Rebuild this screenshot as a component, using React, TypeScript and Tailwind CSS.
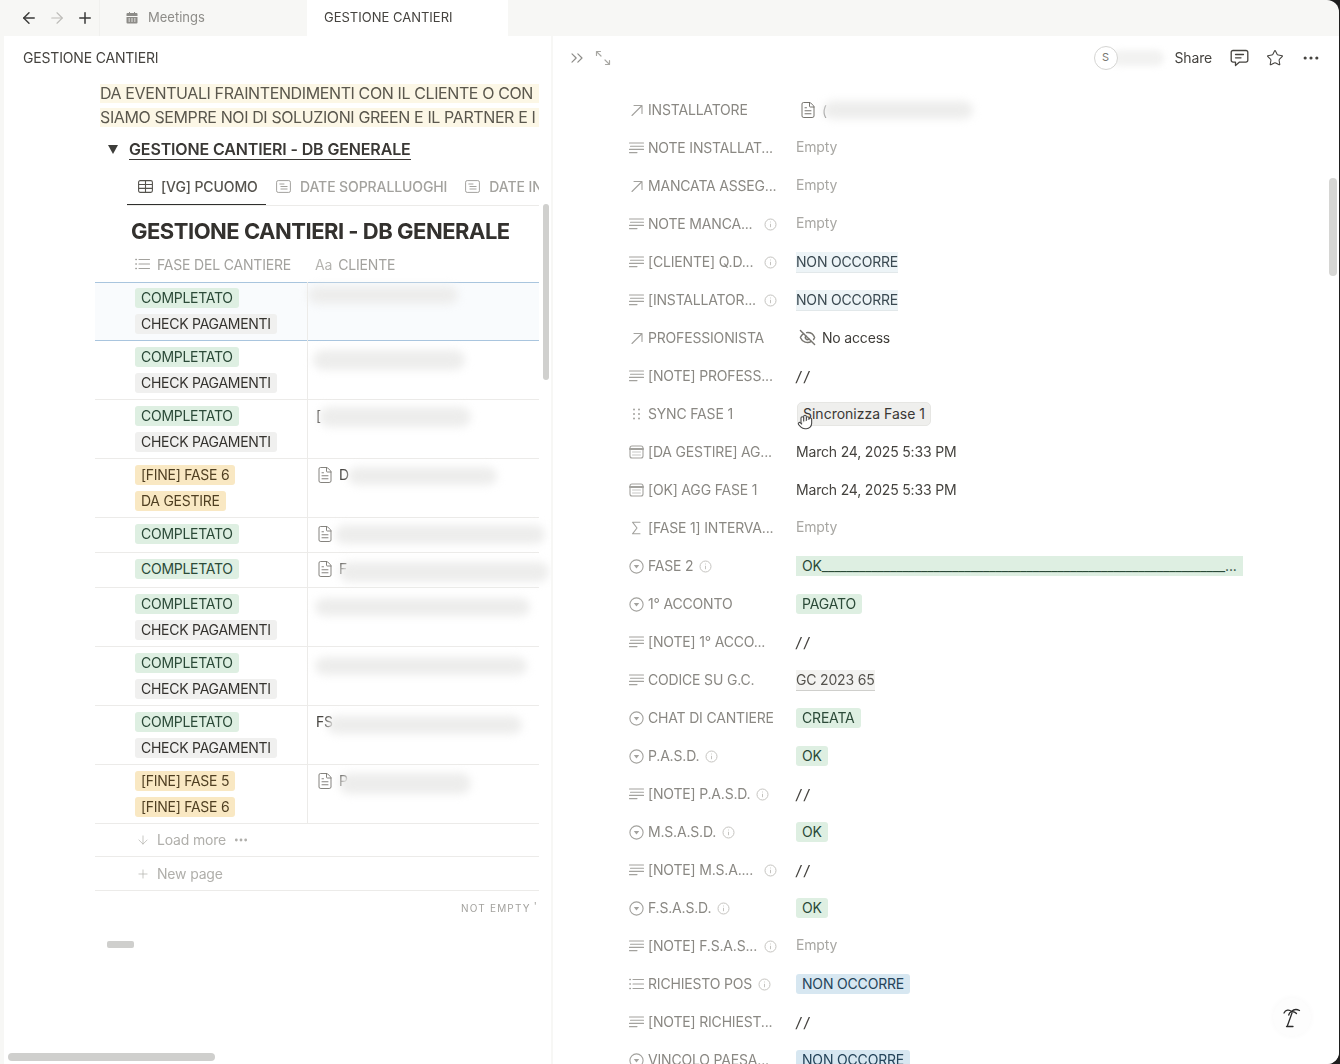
import { ArrowLeft, ArrowRight, Plus, ChevronsRight, Star, Ellipsis, FileText, EyeOff, Hand, ArrowDown } from "lucide-react";

const stroke = { fill: "none", stroke: "currentColor", strokeWidth: 1.1, strokeLinecap: "round" as const, strokeLinejoin: "round" as const };

function TextIcon() {
  return (
    <svg width="15" height="14" viewBox="0 0 15 14" {...stroke}>
      <path d="M.5 2h14M1.5 5.2h13M.5 8.400h14M.5 11.600h7.500" />
    </svg>
  );
}
function RelIcon() {
  return (
    <svg width="15" height="14" viewBox="0 0 15 14" {...stroke}>
      <path d="M3 12.500 12.500 3M5 2.500h8v8" />
    </svg>
  );
}
function ListIcon() {
  return (
    <svg width="15" height="14" viewBox="0 0 15 14" {...stroke}>
      <path d="M4 2.500h10.500M4 7h10.500M4 11.500h10.500" />
      <path d="M.8 2.500h.6M.8 7h.6M.8 11.500h.6" strokeWidth="1.400" />
    </svg>
  );
}
function SelectIcon() {
  return (
    <svg width="15" height="15" viewBox="0 0 15 15" {...stroke}>
      <circle cx="7.500" cy="7.500" r="6.600" />
      <path d="M4.800 6h5.400L7.500 9.400z" fill="currentColor" stroke="none" />
    </svg>
  );
}
function SigmaIcon() {
  return (
    <svg width="15" height="14" viewBox="0 0 15 14" {...stroke}>
      <path d="M11 1.200H3.500L8 7l-4.500 5.800H11" />
    </svg>
  );
}
function CalIcon() {
  return (
    <svg width="15" height="14" viewBox="0 0 15 14" {...stroke}>
      <rect x="1" y="1" width="13" height="12" rx="2" />
      <path d="M1 4h13" strokeWidth="2" />
      <path d="M3.500 7h8M3.500 10h8" strokeWidth=".6" />
    </svg>
  );
}
function GripIcon() {
  return (
    <svg width="15" height="14" viewBox="0 0 15 14" fill="currentColor">
      <circle cx="5" cy="2.500" r="1" />
      <circle cx="10" cy="2.500" r="1" />
      <circle cx="5" cy="7" r="1" />
      <circle cx="10" cy="7" r="1" />
      <circle cx="5" cy="11.500" r="1" />
      <circle cx="10" cy="11.500" r="1" />
    </svg>
  );
}
function InfoIcon() {
  return (
    <svg width="13" height="13" viewBox="0 0 13 13" fill="none" stroke="#c4c3bf" strokeWidth="1" className="shrink-0">
      <circle cx="6.500" cy="6.500" r="5.500" />
      <path d="M6.500 5.800v3.400M6.500 3.600v.8" />
    </svg>
  );
}
function TableIcon() {
  return (
    <svg width="15" height="13" viewBox="0 0 15 13" fill="none" stroke="currentColor" strokeWidth="1.100">
      <rect x=".6" y=".6" width="13.800" height="11.800" rx="1.600" />
      <path d="M.6 4.500h13.800M.6 8.400h13.800M7.500 .6v11.800" />
    </svg>
  );
}
function FeedIcon() {
  return (
    <svg width="15" height="13" viewBox="0 0 15 13" fill="none" stroke="currentColor" strokeWidth="1">
      <rect x=".6" y=".6" width="13.800" height="11.800" rx="1.600" />
      <path d="M3.400 4h5M4.500 6.500h7M4.500 9h7" />
    </svg>
  );
}
function MeetIcon() {
  return (
    <svg width="12" height="12" viewBox="0 0 12 12" fill="currentColor">
      <path d="M1.500 1H3V0h1v1h4V0h1v1h1.500A1 1 0 0 1 11.500 2v2H.5V2a1 1 0 0 1 1-1Z" />
      <path d="M.5 5h11v5.500a1 1 0 0 1-1 1h-9a1 1 0 0 1-1-1Zm2 1.500v1h1.500v-1Zm2.700 0v1h1.600v-1Zm2.800 0v1h1.500v-1Zm-5.500 2v1h1.500v-1Zm2.700 0v1h1.600v-1Zm2.800 0v1h1.500v-1Z" fillRule="evenodd" />
    </svg>
  );
}
function ExpandIcon() {
  return (
    <svg width="16" height="16" viewBox="0 0 16 16" fill="none" stroke="currentColor" strokeWidth="1.200" strokeLinecap="round" strokeLinejoin="round">
      <path d="M1.500 5.500v-4h4M1.800 1.800 6 6M14.500 10.500v4h-4M14.200 14.200 10 10" />
    </svg>
  );
}
function CommentIcon() {
  return (
    <svg width="19" height="18" viewBox="0 0 19 18" fill="none" stroke="currentColor" strokeWidth="1.300" strokeLinejoin="round" strokeLinecap="round">
      <path d="M3 1.500h13a1.800 1.800 0 0 1 1.800 1.800v8a1.800 1.800 0 0 1-1.800 1.800h-6.500L5.500 16.500v-3.400H3a1.800 1.800 0 0 1-1.800-1.800v-8A1.800 1.800 0 0 1 3 1.500Z" />
      <path d="M5.500 5.500h8M5.500 8.800h5.500" />
    </svg>
  );
}
function PalmIcon() {
  return (
    <svg width="18" height="21" viewBox="0 0 18 21" fill="none" stroke="#2b2b2b" strokeWidth="1.300" strokeLinecap="round" strokeLinejoin="round">
      <path d="M1 6C2.500 3 6 2 8.500 4.500c2-2 5.500-2.300 8-1" />
      <path d="M8.500 4.500c-1 .5-2.300 1.300-2.800 3.500M8.500 4.500c2 .2 4 .8 5 2" />
      <path d="M9 6 4.500 18.500M3.500 19.500h6.500" />
    </svg>
  );
}

type PillColor = "g" | "n" | "y" | "b";
const pillClass: Record<PillColor, string> = {
  g: "bg-[#deefe2] text-[#2b4a38]",
  n: "bg-[#f0f0ef] text-[#35332f]",
  y: "bg-[#f9e8c3] text-[#4f3f22]",
  b: "bg-[#d7e7f1] text-[#25445a]",
};
function Pill({ c, children }: { c: PillColor; children: string }) {
  return <span className={`h-[20px] px-[6px] rounded-[3px] text-[14px] leading-[20px] whitespace-nowrap ${pillClass[c]}`}>{children}</span>;
}

type Row = {
  pills: [PillColor, string][];
  file?: boolean;
  prefix?: string;
  blur: string;
  h: string;
};
const C: [PillColor, string] = ["g", "COMPLETATO"];
const P: [PillColor, string] = ["n", "CHECK PAGAMENTI"];
const rows: Row[] = [
  { pills: [C, P], blur: "ml-[-8px] mt-[-2px] w-[150px] h-[18px]", h: "h-[58px] pt-[5px] bg-[#f9fbfd] border-[#a9c5de]" },
  { pills: [C, P], blur: "ml-[-3px] mt-[3px] w-[152px] h-[20px]", h: "h-[59px] pt-[6px] border-[#ecebe9]" },
  { pills: [C, P], prefix: "[", blur: "ml-[-2px] mt-[1px] w-[152px] h-[20px]", h: "h-[59px] pt-[6px] border-[#ecebe9]" },
  { pills: [["y", "[FINE] FASE 6"], ["y", "DA GESTIRE"]], file: true, prefix: "D", blur: "ml-[-1px] mt-[2px] w-[149px] h-[18px]", h: "h-[59px] pt-[6px] border-[#ecebe9]" },
  { pills: [C], file: true, blur: "ml-[-4px] mt-[1px] w-[210px] h-[19px]", h: "h-[35px] pt-[6px] border-[#ecebe9]" },
  { pills: [C], file: true, prefix: "F", blur: "ml-[-8px] mt-[3px] w-[210px] h-[20px]", h: "h-[35px] pt-[6px] border-[#ecebe9]" },
  { pills: [C, P], blur: "ml-[-1px] mt-[4px] w-[215px] h-[18px]", h: "h-[59px] pt-[6px] border-[#ecebe9]" },
  { pills: [C, P], blur: "ml-[-1px] mt-[4px] w-[212px] h-[18px]", h: "h-[59px] pt-[6px] border-[#ecebe9]" },
  { pills: [C, P], prefix: "FS", blur: "ml-[-6px] mt-[4px] w-[195px] h-[18px]", h: "h-[59px] pt-[6px] border-[#ecebe9]" },
  { pills: [["y", "[FINE] FASE 5"], ["y", "[FINE] FASE 6"]], file: true, prefix: "P", blur: "ml-[-9px] mt-[2px] w-[132px] h-[21px]", h: "h-[59px] pt-[6px] border-[#ecebe9]" },
];

type Kind = "text" | "rel" | "list" | "select" | "sigma" | "cal" | "grip";
const kindIcon: Record<Kind, () => React.ReactElement> = {
  text: TextIcon,
  rel: RelIcon,
  list: ListIcon,
  select: SelectIcon,
  sigma: SigmaIcon,
  cal: CalIcon,
  grip: GripIcon,
};
type Prop = { k: Kind; label: string; info?: "end" | "after"; v: React.ReactNode };

const Empty = <span className="text-[#a8a7a3] mb-[3px]">Empty</span>;
const Slash = <span className="italic font-medium text-[#45433f] tracking-[-0.5px]">/ /</span>;
const Plain = ({ t }: { t: string }) => <span className="text-[#45433f] mb-[1px]">{t}</span>;
const Tag = ({ c, t }: { c: PillColor; t: string }) => <Pill c={c}>{t}</Pill>;
const Faint = <span className="bg-[#edf4f7] text-[#3b4a52] leading-[20px] border-b border-[#e2e8ea]">NON OCCORRE</span>;

const props: Prop[] = [
  {
    k: "rel",
    label: "INSTALLATORE",
    v: (
      <span className="flex items-center ml-[3px]">
        <FileText size={18} strokeWidth={1.2} className="text-[#66645f]" />
        <span className="ml-[5px] text-[#888]">(</span>
        <span className="ml-[-4px] w-[150px] h-[18px] rounded-full bg-[#ededec] blur-[4px]" />
      </span>
    ),
  },
  { k: "text", label: "NOTE INSTALLAT...", v: Empty },
  { k: "rel", label: "MANCATA ASSEG...", v: Empty },
  { k: "text", label: "NOTE MANCA...", info: "end", v: Empty },
  { k: "text", label: "[CLIENTE] Q.D...", info: "end", v: Faint },
  { k: "text", label: "[INSTALLATOR...", info: "end", v: Faint },
  {
    k: "rel",
    label: "PROFESSIONISTA",
    v: (
      <span className="flex items-center ml-[3px] text-[#3f3d39] mb-[1px]">
        <EyeOff size={17} strokeWidth={2} className="text-[#77756f]" />
        <span className="ml-[6px]">No access</span>
      </span>
    ),
  },
  { k: "text", label: "[NOTE] PROFESS...", v: Slash },
  {
    k: "grip",
    label: "SYNC FASE 1",
    v: (
      <span className="relative ml-[1px] block h-[24px] px-[5px] rounded-[5px] bg-[#efefed] border border-[#e6e6e3] leading-[22px] tracking-normal text-[#3a3835]">
        Sincronizza Fase 1
        <Hand size={16} strokeWidth={1.6} className="absolute left-[-1px] top-[11px] text-[#444] fill-white" />
      </span>
    ),
  },
  { k: "cal", label: "[DA GESTIRE] AG...", v: <Plain t="March 24, 2025 5:33 PM" /> },
  { k: "cal", label: "[OK] AGG FASE 1", v: <Plain t="March 24, 2025 5:33 PM" /> },
  { k: "sigma", label: "[FASE 1] INTERVA...", v: Empty },
  {
    k: "select",
    label: "FASE 2",
    info: "after",
    v: <span className="block w-[447px] h-[20px] px-[6px] whitespace-nowrap bg-[#deefe2] text-[#2b4a38] leading-[20px]">{"OK" + "_".repeat(65) + "..."}</span>,
  },
  { k: "select", label: "1° ACCONTO", v: <Tag c="g" t="PAGATO" /> },
  { k: "text", label: "[NOTE] 1° ACCO...", v: Slash },
  { k: "text", label: "CODICE SU G.C.", v: <span className="bg-[#f3f3f1] text-[#55534e] leading-[20px] border-b border-[#cfcfcc]">GC 2023 65</span> },
  { k: "select", label: "CHAT DI CANTIERE", v: <Tag c="g" t="CREATA" /> },
  { k: "select", label: "P.A.S.D.", info: "after", v: <Tag c="g" t="OK" /> },
  { k: "text", label: "[NOTE] P.A.S.D.", info: "after", v: Slash },
  { k: "select", label: "M.S.A.S.D.", info: "after", v: <Tag c="g" t="OK" /> },
  { k: "text", label: "[NOTE] M.S.A....", info: "end", v: Slash },
  { k: "select", label: "F.S.A.S.D.", info: "after", v: <Tag c="g" t="OK" /> },
  { k: "text", label: "[NOTE] F.S.A.S...", info: "end", v: Empty },
  { k: "list", label: "RICHIESTO POS", info: "after", v: <Tag c="b" t="NON OCCORRE" /> },
  { k: "text", label: "[NOTE] RICHIEST...", v: Slash },
  { k: "select", label: "VINCOLO PAESA...", v: <Tag c="b" t="NON OCCORRE" /> },
];

function PropRow({ p }: { p: Prop }) {
  const I = kindIcon[p.k];
  return (
    <div className="h-[38px] shrink-0 flex items-center text-[14px]">
      <div className="w-[167px] pr-[19px] flex items-center text-[#8a8883]">
        <span className="w-[15px] shrink-0 flex justify-center text-[#a3a29e]">
          <I />
        </span>
        <span className="ml-[4px] mb-[2px] whitespace-nowrap">{p.label}</span>
        {p.info === "after" && <span className="ml-[6px]"><InfoIcon /></span>}
        {p.info === "end" && <span className="ml-auto"><InfoIcon /></span>}
      </div>
      {p.v}
    </div>
  );
}

function TableRow({ r }: { r: Row }) {
  return (
    <div className={`flex border-b ${r.h}`}>
      <div className="w-[212px] shrink-0 pl-[40px] flex flex-col items-start gap-[6px] tracking-[-0.27px]">
        {r.pills.map(([c, t], i) => (
          <Pill key={i} c={c}>{t}</Pill>
        ))}
      </div>
      <div className="flex-1 -mt-[6px] -mb-[1px] border-l border-[#ecebe9] pl-[8px] pt-[6px] flex items-start">
        {r.file && <FileText size={18} strokeWidth={1.2} className="text-[#77756f] mt-[1px] mr-[5px] shrink-0" />}
        {r.prefix && <span className="text-[14px] leading-[20px] text-[#45433f]">{r.prefix}</span>}
        <span className={`shrink-0 rounded-full bg-[#ededec] blur-[4px] ${r.blur}`} />
      </div>
    </div>
  );
}

export default function App() {
  return (
    <div className="w-[1340px] h-[1064px] bg-[#1e1e1e] overflow-hidden font-['Inter',sans-serif]">
      <div className="w-[1339px] h-full rounded-r-[12px] bg-[#f7f7f5] flex flex-col overflow-hidden blur-[0.35px]">
        <div className="h-[36px] shrink-0 flex items-stretch">
          <div className="w-[100px] shrink-0 flex items-center pl-[20px] gap-[10px] border-r border-[#f0f0ee]">
            <ArrowLeft size={18} strokeWidth={1.9} className="text-[#3a3a38]" />
            <ArrowRight size={18} strokeWidth={1.5} className="text-[#bdbcb8]" />
            <Plus size={18} strokeWidth={2} className="text-[#3a3a38]" />
          </div>
          <div className="w-[207px] shrink-0 flex items-center pl-[26px] text-[13px] text-[#8d8c88]">
            <MeetIcon />
            <span className="ml-[10px]">Meetings</span>
          </div>
          <div className="w-[201px] shrink-0 flex items-center pl-[17px] bg-white text-[13px] text-[#45433f]">GESTIONE CANTIERI</div>
        </div>
        <div className="flex-1 min-h-0 flex pl-[4px] tracking-[-0.18px]">
          <div className="relative w-[547px] shrink-0 bg-white overflow-hidden">
            <div className="h-[43px] flex items-center pl-[19px] text-[14px] text-[#45433f]">GESTIONE CANTIERI</div>
            <div className="mt-[2px] ml-[96px] w-[439px] text-[16px] tracking-[-0.39px] text-[#5a574d] whitespace-nowrap">
              <div className="h-[24px] flex items-center"><span className="w-full h-[19px] leading-[19px] bg-[#fcf7e6]">DA EVENTUALI FRAINTENDIMENTI CON IL CLIENTE O CON</span></div>
              <div className="h-[24px] flex items-center"><span className="w-full h-[19px] leading-[19px] bg-[#fcf7e6]">SIAMO SEMPRE NOI DI SOLUZIONI GREEN E IL PARTNER E I</span></div>
            </div>
            <div className="mt-[8px] ml-[104px] h-[24px] flex items-center">
              <svg width="10" height="9" viewBox="0 0 10 9" fill="#3d3d3a"><path d="M0 0h10L5 9z" /></svg>
              <span className="ml-[11px] text-[16px] font-semibold leading-[20px] tracking-[-0.14px] text-[#3a3835] border-b border-[#3a3835]">GESTIONE CANTIERI - DB GENERALE</span>
            </div>
            <div className="mt-[7px] ml-[123px] w-[412px] h-[38px] flex border-b border-[#ecebe9] text-[14px] overflow-hidden whitespace-nowrap font-medium tracking-[-0.1px]">
              <div className="w-[139px] h-[38px] shrink-0 flex items-center pl-[11px] border-b-2 border-[#2f2f2d] text-[#55534e]">
                <TableIcon />
                <span className="ml-[8px]">[VG] PCUOMO</span>
              </div>
              <div className="shrink-0 flex items-center pl-[10px] text-[#a3a29e]">
                <FeedIcon />
                <span className="ml-[9px]">DATE SOPRALLUOGHI</span>
              </div>
              <div className="shrink-0 flex items-center pl-[18px] text-[#a3a29e]">
                <FeedIcon />
                <span className="ml-[9px]">DATE IN</span>
              </div>
            </div>
            <div className="ml-[127px] h-[42px] pt-[8px] flex items-center text-[22px] font-bold tracking-[-0.5px] text-[#33312e] whitespace-nowrap">GESTIONE CANTIERI - DB GENERALE</div>
            <div className="ml-[91px] w-[444px]">
              <div className="h-[35px] flex items-center border-b border-[#a9c5de] text-[14px] text-[#a3a29e]">
                <div className="w-[212px] shrink-0 flex items-center pl-[40px] pb-[2px]">
                  <ListIcon />
                  <span className="ml-[7px]">FASE DEL CANTIERE</span>
                </div>
                <div className="pl-[8px] pb-[2px]">
                  <span className="text-[#b5b4b0]">Aa</span>
                  <span className="ml-[6px]">CLIENTE</span>
                </div>
              </div>
              {rows.map((r, i) => (
                <TableRow key={i} r={r} />
              ))}
              <div className="h-[33px] flex items-center pl-[41px] border-b border-[#ecebe9] text-[14px] text-[#b0afab]">
                <ArrowDown size={14} strokeWidth={1.2} />
                <span className="ml-[7px] mb-[1px]">Load more</span>
                <Ellipsis size={16} strokeWidth={2.2} className="ml-[7px]" />
              </div>
              <div className="h-[34px] flex items-center pl-[41px] border-b border-[#ecebe9] text-[14px] text-[#b0afab]">
                <Plus size={14} strokeWidth={1.2} />
                <span className="ml-[7px]">New page</span>
              </div>
              <div className="h-[34px] flex items-center justify-end pr-[1px] whitespace-nowrap text-[10px] tracking-[0.12em] text-[#a3a29e]">
                NOT EMPTY <span className="ml-[3px] mb-[3px]">'</span>
              </div>
            </div>
            <div className="mt-[16px] ml-[103px] w-[27px] h-[7px] rounded-[2px] bg-[#cfcfcd]" />
            <div className="absolute right-[2px] top-[168px] w-[6px] h-[176px] rounded-full bg-[#d0d0ce]" />
            <div className="absolute left-[4px] bottom-[3px] w-[207px] h-[8px] rounded-full bg-[#cfcfcd]" />
          </div>
          <div className="relative flex-1 ml-[2px] bg-white overflow-hidden">
            <div className="h-[43px] flex items-center text-[#8d8c88]">
              <ChevronsRight size={20} strokeWidth={1.4} className="ml-[14px]" />
              <span className="ml-[8px] text-[#a8a7a3]"><ExpandIcon /></span>
              <div className="ml-auto flex items-center text-[#45433f]">
                <span className="w-[24px] h-[24px] rounded-full border border-[#d4d4d2] bg-white flex items-center justify-center text-[11px] text-[#77756f] z-10">S</span>
                <span className="ml-[-6px] w-[52px] h-[16px] rounded-full bg-[#f2f2f1] blur-[3px]" />
                <span className="ml-[11px] text-[14px]">Share</span>
                <span className="ml-[18px]"><CommentIcon /></span>
                <Star size={18} strokeWidth={1.4} className="ml-[17px]" />
                <Ellipsis size={20} strokeWidth={1.8} className="ml-[17px] mr-[18px]" />
              </div>
            </div>
            <div className="pt-[12px] pl-[76px]">
              {props.map((p, i) => (
                <PropRow key={i} p={p} />
              ))}
            </div>
            <div className="absolute right-[2px] top-[142px] w-[8px] h-[98px] rounded-full bg-[#d6d6d4]" />
            <div className="absolute right-[28px] bottom-[28px] w-[38px] h-[38px] rounded-full bg-[#fdfdfd] shadow-[0_0_6px_rgba(0,0,0,0.03)] flex items-center justify-center">
              <PalmIcon />
            </div>
          </div>
        </div>
      </div>
    </div>
  );
}
